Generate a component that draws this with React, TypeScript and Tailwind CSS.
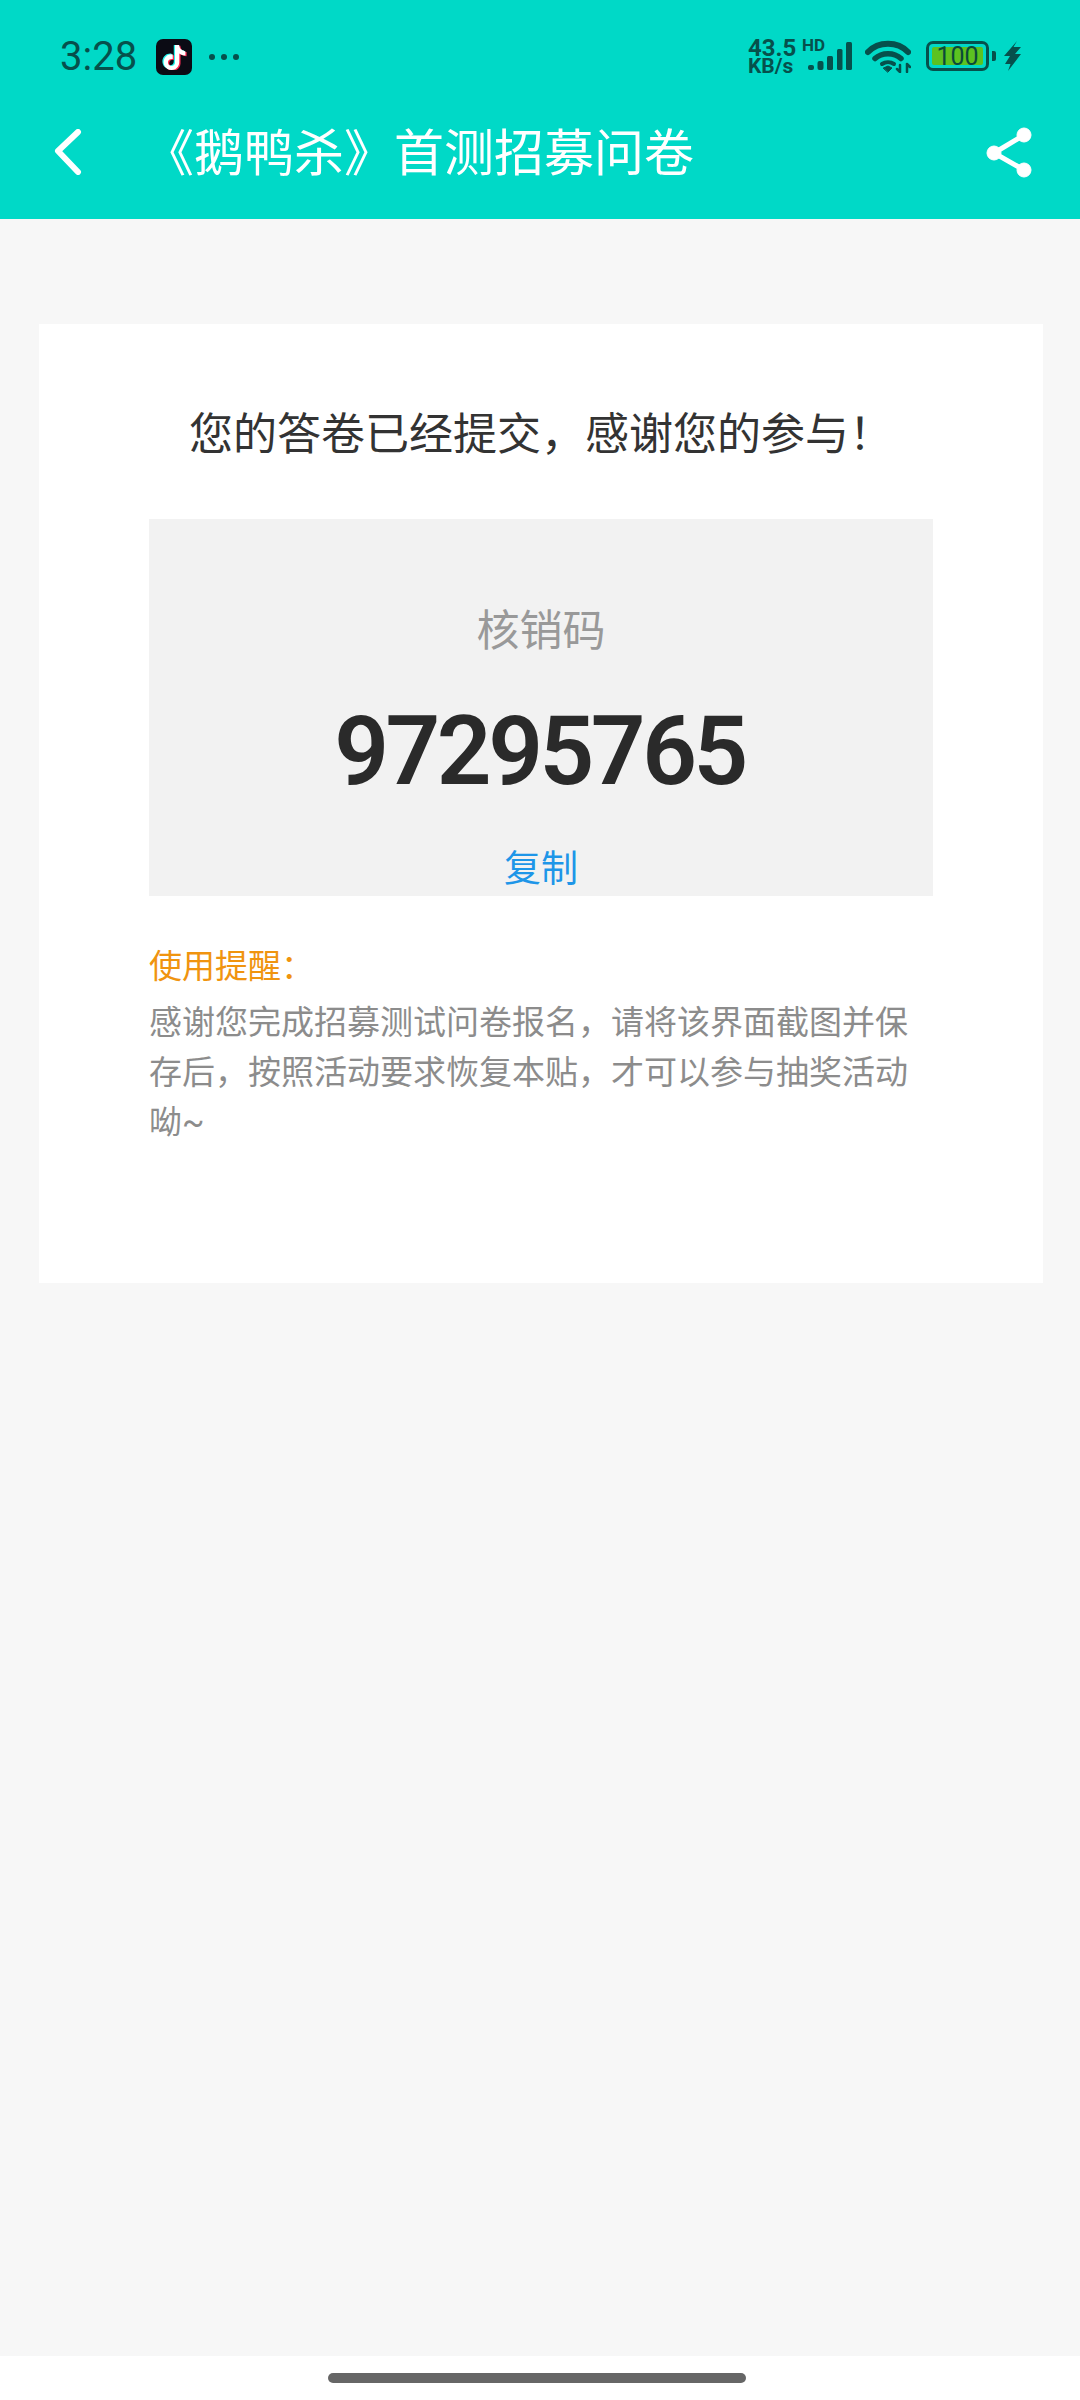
import React from "react";

const CJK = "font-['Roboto','Noto_Sans_CJK_SC',sans-serif]";
const TIKTOK =
  "M12.525.02c1.31-.02 2.61-.01 3.91-.02.08 1.53.63 3.09 1.75 4.17 1.12 1.11 2.7 1.62 4.24 1.79v4.03c-1.44-.05-2.89-.35-4.2-.97-.57-.26-1.1-.59-1.62-.93-.01 2.92.01 5.84-.02 8.75-.08 1.4-.54 2.79-1.35 3.94-1.31 1.92-3.58 3.17-5.91 3.21-1.43.08-2.86-.31-4.08-1.03-2.02-1.19-3.44-3.37-3.65-5.71-.02-.5-.03-1-.01-1.49.18-1.9 1.12-3.72 2.58-4.96 1.66-1.44 3.98-2.13 6.15-1.72.02 1.48-.04 2.96-.04 4.44-.99-.32-2.15-.23-3.02.37-.63.41-1.11 1.04-1.36 1.75-.21.51-.15 1.07-.14 1.61.24 1.64 1.82 3.02 3.5 2.87 1.12-.01 2.19-.66 2.77-1.61.19-.33.4-.67.41-1.06.1-1.79.06-3.57.07-5.36.01-4.03-.01-8.05.02-12.07z";

function TikTokIcon() {
  return (
    <div className="w-[36px] h-[36px] rounded-[7px] bg-[#0b0b14] flex items-center justify-center">
      <svg width="25" height="25" viewBox="0 0 24 24">
        <path d={TIKTOK} fill="#25f4ee" transform="translate(-1.2 -0.8)" />
        <path d={TIKTOK} fill="#fe2c55" transform="translate(1.2 0.8)" />
        <path d={TIKTOK} fill="#ffffff" />
      </svg>
    </div>
  );
}

function SignalIcon() {
  return (
    <svg width="44" height="30" viewBox="0 0 44 30" fill="#06504c">
      <rect x="0" y="24" width="6" height="5" rx="2" />
      <rect x="9.5" y="20" width="6" height="9" rx="2" />
      <rect x="19" y="15" width="6" height="14" rx="1.5" />
      <rect x="29" y="8" width="5.5" height="21" rx="1.5" />
      <rect x="38" y="1" width="6" height="28" rx="1.5" />
    </svg>
  );
}

function WifiIcon() {
  return (
    <svg width="46" height="33" viewBox="0 0 46 33" fill="none" stroke="#06504c" strokeLinecap="round">
      <path d="M3 12C13.5 1 32.5 1 43 12" strokeWidth="6" />
      <path d="M10 18.5C17 12 29 12 36 18.5" strokeWidth="5.5" />
      <path d="M17 24C20.5 21.5 25.5 21.5 29 24" strokeWidth="4" />
      <path d="M18.5 28L23 26L27 28L23 32Z" fill="#06504c" strokeWidth="1" />
      <path d="M35 25V32M32 29L35 32M42 24V32M42 24L45 27" strokeWidth="2.5" />
    </svg>
  );
}

function BatteryIcon() {
  return (
    <div className="flex items-center gap-[3px]">
      <div className="w-[63px] h-[30px] rounded-[7px] border-[3px] border-[#06504c] p-[3px] flex">
        <div className={`flex-1 rounded-[2px] bg-[#5cc221] flex items-center justify-center text-[25px] leading-none text-[#0a4a3a] ${CJK}`}>
          100
        </div>
      </div>
      <div className="w-[4px] h-[10px] rounded-r-[2px] bg-[#06504c]" />
    </div>
  );
}

function BoltIcon() {
  return (
    <svg width="17" height="30" viewBox="0 0 17 30" fill="#06504c">
      <path d="M13 0L0 15H6L1 23H6.5L4 30L17 13H11L17 6H9.5Z" />
    </svg>
  );
}

function StatusBar() {
  return (
    <div className={`h-[114px] pl-[60px] pr-[60px] pt-[38px] flex items-start justify-between text-[#06504c] ${CJK}`}>
      <div className="flex items-center h-[38px]">
        <span className="text-[40px] leading-none w-[96px]">3:28</span>
        <TikTokIcon />
        <div className="flex gap-[6px] ml-[17px]">
          <span className="w-[6px] h-[6px] rounded-full bg-[#06504c]" />
          <span className="w-[6px] h-[6px] rounded-full bg-[#06504c]" />
          <span className="w-[6px] h-[6px] rounded-full bg-[#06504c]" />
        </div>
      </div>
      <div className="flex items-center h-[36px]">
        <div className="flex flex-col items-start w-[60px] font-bold leading-none">
          <span className="text-[24px] leading-[20px]">43.5</span>
          <span className="text-[21px] leading-[17px]">KB/s</span>
        </div>
        <div className="relative mr-[13px]">
          <SignalIcon />
          <span className="absolute left-[-6px] top-[-4px] text-[17px] leading-none font-bold">HD</span>
        </div>
        <WifiIcon />
        <div className="ml-[15px]">
          <BatteryIcon />
        </div>
        <div className="ml-[8px] mr-[-1px]">
          <BoltIcon />
        </div>
      </div>
    </div>
  );
}

function NavBar() {
  return (
    <div className="h-[105px] flex items-center pb-[30px] pl-[54px] pr-[46px]">
      <svg width="28" height="46" viewBox="0 0 28 46" fill="none" stroke="#ffffff" strokeWidth="6" strokeLinecap="round" strokeLinejoin="round">
        <path d="M24 3L4 22L24 43" />
      </svg>
      <h1 className={`ml-[62px] mt-[4px] flex-1 text-[50px] leading-none text-white font-normal ${CJK}`}>《鹅鸭杀》首测招募问卷</h1>
      <svg width="48" height="52" viewBox="0 0 48 52" fill="#ffffff" stroke="#ffffff">
        <path d="M38 9L8 27L38 44" fill="none" strokeWidth="5" />
        <circle cx="38" cy="9" r="7" strokeWidth="1" />
        <circle cx="8" cy="27" r="7" strokeWidth="1" />
        <circle cx="38" cy="44" r="7" strokeWidth="1" />
      </svg>
    </div>
  );
}

export default function App() {
  return (
    <div className={`w-[1080px] h-[2400px] flex flex-col bg-[#f7f7f7] overflow-hidden ${CJK}`}>
      <header className="h-[219px] bg-[#00d9c7]">
        <StatusBar />
        <NavBar />
      </header>

      <main className="flex-1 pl-[39px] pr-[37px] pt-[105px]">
        <section className="h-[959px] bg-white px-[110px] pt-[84px]">
          <h2 className="h-[54px] text-center text-[44px] leading-[54px] font-normal text-[#333333]">
            {"您的答卷已经提交\uFF0C感谢您的参与\uFF01"}
          </h2>

          <div className="mt-[57px] h-[377px] bg-[#f2f2f2] flex flex-col items-center overflow-hidden">
            <div className="mt-[88px] text-[43px] leading-[48px] font-normal text-[#999999]">核销码</div>
            <div className="mt-[48px] mr-[3px] text-[96px] leading-[96px] font-semibold tracking-[-3.5px] text-[#2a2a2a]">97295765</div>
            <button className="mt-[49px] text-[37px] leading-[44px] font-normal text-[#1e96e8]">复制</button>
          </div>

          <p className="mt-[46px] text-[33px] leading-[50px] font-normal text-[#f0940f]">{"使用提醒\uFF1A"}</p>
          <p className="mt-[6px] text-[33px] leading-[50px] font-normal text-[#8c8c8c]">
            {"感谢您完成招募测试问卷报名\uFF0C请将该界面截图并保存后\uFF0C按照活动要求恢复本贴\uFF0C才可以参与抽奖活动呦~"}
          </p>
        </section>
      </main>

      <footer className="h-[44px] bg-white flex justify-center pt-[17px]">
        <div className="w-[418px] h-[10px] ml-[-6px] rounded-full bg-[#666666]" />
      </footer>
    </div>
  );
}
